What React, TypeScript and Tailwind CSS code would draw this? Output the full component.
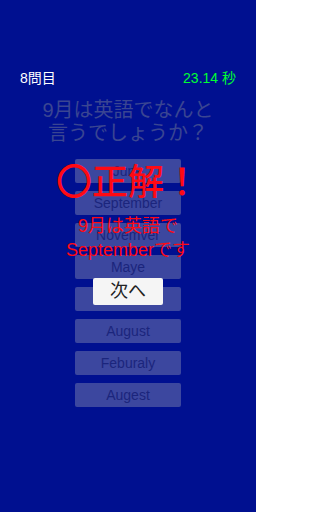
const choices = ["June", "September", "Novemver", "Maye", "", "August", "Feburaly", "Augest"];

const jp = { fontFamily: '"Liberation Sans", "Noto Sans CJK JP", sans-serif' };

export default function App() {
  return (
    <div className="relative w-[256px] h-[512px] bg-[#001090] overflow-hidden" style={jp}>
      <div className="flex justify-between items-center px-[20px] pt-[68px] h-[88px] text-[14px] leading-[18px]">
        <span className="text-white">8問目</span>
        <span className="text-[#00ff33]">23.14 秒</span>
      </div>

      <div className="mt-[11px] text-center text-[20px] leading-[23px] text-[#3a4592]">
        <p>9月は英語でなんと</p>
        <p>言うでしょうか？</p>
      </div>

      <div className="mt-[14px] flex flex-col items-center gap-[8px]">
        {choices.map((c, i) => (
          <div
            key={i}
            className="w-[106px] h-[24px] rounded-[2px] bg-[#3c479f] flex items-center justify-center text-[14px] text-[#1b257c]"
          >
            {c}
          </div>
        ))}
      </div>

      {/* result overlay */}
      <div className="absolute left-0 right-0 top-[160px] flex flex-col items-center text-[#ff0a14]">
        <p className="text-[36px] leading-[46px] font-medium">〇正解！</p>
        <p className="mt-[8px] text-[18px] leading-[24px] text-center">
          9月は英語で
          <br />
          Septemberです
        </p>
      </div>

      <div className="absolute left-[93px] top-[278px] w-[70px] h-[27px] bg-[#f5f5f5] rounded-[2px] flex items-center justify-center text-[18px] text-[#222]">
        次へ
      </div>
    </div>
  );
}
